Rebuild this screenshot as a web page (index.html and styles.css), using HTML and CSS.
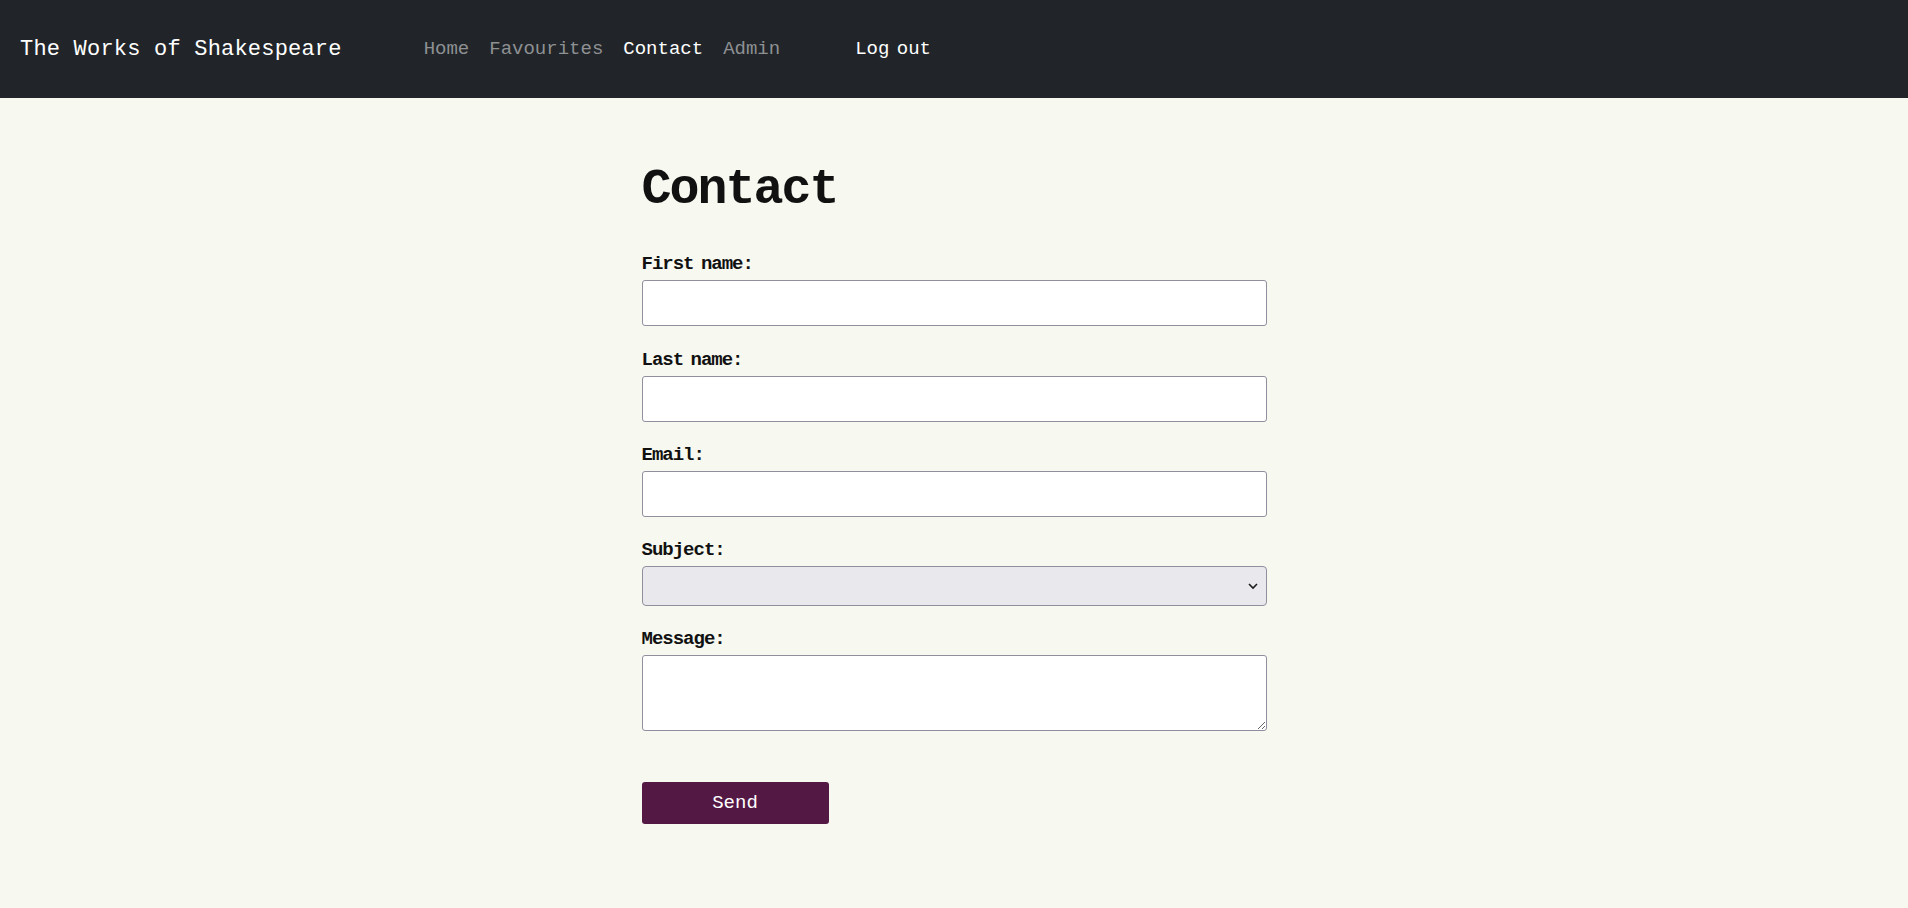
FILE: index.html
```html
<!DOCTYPE html>
<html lang="en">
<head>
<meta charset="utf-8">
<title>Contact - The Works of Shakespeare</title>
<link rel="stylesheet" href="styles.css">
</head>
<body>
<nav class="navbar">
  <a class="brand" href="#">The Works of Shakespeare</a>
  <ul class="nav-links">
    <li><a class="nav-link" href="#">Home</a></li>
    <li><a class="nav-link" href="#">Favourites</a></li>
    <li><a class="nav-link active" href="#">Contact</a></li>
    <li><a class="nav-link" href="#">Admin</a></li>
  </ul>
  <a class="nav-link logout" href="#">Log out</a>
</nav>
<main class="page">
  <form class="contact-form">
    <h1 class="title">Contact</h1>
    <div class="field first">
      <label class="label" for="fname">First name:</label>
      <input class="control" id="fname" type="text">
    </div>
    <div class="field">
      <label class="label" for="lname">Last name:</label>
      <input class="control" id="lname" type="text">
    </div>
    <div class="field">
      <label class="label" for="email">Email:</label>
      <input class="control" id="email" type="email">
    </div>
    <div class="field">
      <label class="label" for="subject">Subject:</label>
      <div class="select-wrap">
        <select class="control select" id="subject">
          <option></option>
        </select>
        <svg class="chevron" width="12" height="8" viewBox="0 0 12 8"><path d="M2 2 L6 6 L10 2" fill="none" stroke="#1b1b1b" stroke-width="1.6"/></svg>
      </div>
    </div>
    <div class="field">
      <label class="label" for="message">Message:</label>
      <textarea class="control textarea" id="message"></textarea>
    </div>
    <button class="send" type="button">Send</button>
  </form>
</main>
</body>
</html>
```
FILE: styles.css
```css
html, body {
  margin: 0;
  padding: 0;
}
body {
  background: #f7f8f0;
  font-family: "Liberation Mono", "Courier New", monospace;
  color: #111;
  min-height: 908px;
}
.navbar {
  height: 98px;
  background: #212529;
  display: flex;
  align-items: center;
  padding: 0 20px;
  box-sizing: border-box;
}
.brand {
  color: #fff;
  text-decoration: none;
  font-size: 22px;
  letter-spacing: 0.2px;
  margin-right: 72px;
}
.nav-links {
  list-style: none;
  margin: 0;
  padding: 0;
  display: flex;
}
.nav-link {
  display: block;
  padding: 0 10px;
  font-size: 19px;
  color: #8e9093;
  text-decoration: none;
}
.nav-link.active {
  color: #fff;
}
.logout {
  color: #fff;
  margin-left: 55px;
  word-spacing: -4px;
}
.page {
  display: flex;
  justify-content: center;
  padding-top: 62px;
}
.contact-form {
  width: 625px;
  display: flex;
  flex-direction: column;
}
.title {
  margin: 0 0 32px 0;
  font-size: 50px;
  line-height: 60px;
  letter-spacing: -2px;
  font-weight: bold;
  height: 60px;
}
.field {
  display: flex;
  flex-direction: column;
  margin-bottom: 21px;
}
.field.first {
  margin-bottom: 22px;
}
.label {
  font-size: 19px;
  line-height: 24px;
  letter-spacing: -1px;
  word-spacing: -3px;
  margin-bottom: 4px;
  font-weight: bold;
}
.control {
  box-sizing: border-box;
  width: 625px;
  height: 46px;
  border: 1px solid #8f8f9d;
  border-radius: 3px;
  background: #fff;
  margin: 0;
  font-family: inherit;
  font-size: 16px;
  padding: 4px 8px;
}
.select-wrap {
  position: relative;
}
.select {
  height: 40px;
  background: #e9e9ed;
  appearance: none;
  -webkit-appearance: none;
  border-radius: 4px;
  display: block;
}
.chevron {
  position: absolute;
  right: 8px;
  top: 16px;
}
.textarea {
  height: 76px;
  resize: vertical;
  display: block;
}
.send {
  margin-top: 30px;
  width: 187px;
  height: 42px;
  background: #541845;
  color: #fff;
  border: none;
  border-radius: 3px;
  font-family: inherit;
  font-size: 19px;
  padding: 0;
}
```
